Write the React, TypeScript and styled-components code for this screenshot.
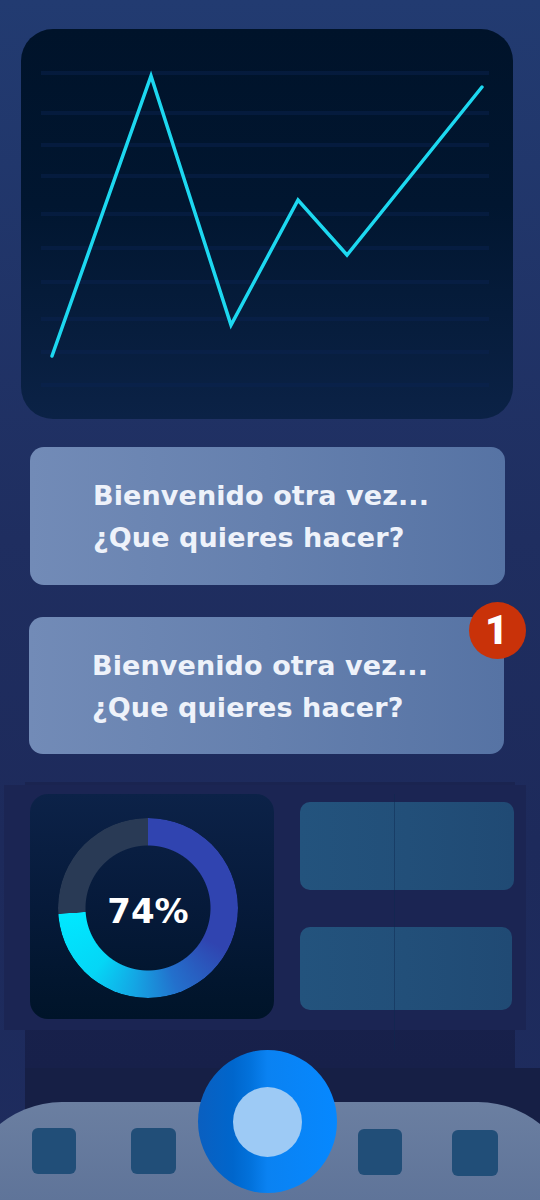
import React from "react";
import styled, { createGlobalStyle } from "styled-components";

const Global = createGlobalStyle`
  html, body { margin: 0; padding: 0; background: #1e2c5d; }
  body { font-family: "DejaVu Sans", "Liberation Sans", sans-serif; }
  * { box-sizing: border-box; }
`;

const Page = styled.div`
  width: 540px;
  height: 1200px;
  overflow: hidden;
  background: linear-gradient(180deg, #223b71 0%, #1f2e60 45%, #1d2a5b 70%, #1e2c5e 100%);
  display: flex;
  flex-direction: column;
`;

const ChartCard = styled.div`
  margin: 29px 27px 0 21px;
  height: 390px;
  border-radius: 32px;
  background: linear-gradient(180deg, #00132a 0%, #011630 45%, #0b2246 100%);
  overflow: hidden;
  flex-shrink: 0;
`;

const ChartSvg = styled.svg`
  display: block;
  width: 100%;
  height: 100%;
`;

const MessageCard = styled.div<{ $top: number; $left: number; $right: number; $h: number }>`
  position: relative;
  margin: ${(p) => p.$top}px ${(p) => p.$right}px 0 ${(p) => p.$left}px;
  height: ${(p) => p.$h}px;
  border-radius: 14px;
  background: linear-gradient(90deg, #728bb7 0%, #6580ae 50%, #5673a4 100%);
  display: flex;
  align-items: center;
  padding-left: 63px;
  flex-shrink: 0;
`;

const MessageText = styled.p`
  margin: 0;
  font-family: "DejaVu Sans", sans-serif;
  font-weight: 700;
  font-size: 27px;
  line-height: 42px;
  color: #eef2fa;
  padding-top: 2px;
  letter-spacing: 0.1px;
`;

const Badge = styled.span`
  position: absolute;
  top: -15px;
  right: -22px;
  width: 57px;
  height: 57px;
  border-radius: 50%;
  background: #c93209;
  color: #ffffff;
  display: flex;
  align-items: center;
  justify-content: center;
  font-family: Roboto, "Liberation Sans", sans-serif;
  font-weight: 900;
  font-size: 40px;
  line-height: 1;
  padding-right: 2px;
`;

const Shell = styled.div`
  margin: 28px 25px 0 25px;
  padding-top: 3px;
  height: 286px;
  background: linear-gradient(180deg, #1a2450 0%, #17204a 100%);
  flex-shrink: 0;
`;

const Panel = styled.div`
  margin: 0 -11px 0 -21px;
  height: 245px;
  background: #1b2553;
  display: grid;
  grid-template-columns: 244px 1fr;
  column-gap: 26px;
  padding: 9px 12px 0 26px;
`;

const DonutCard = styled.div`
  height: 225px;
  border-radius: 18px;
  background: linear-gradient(180deg, #0c2248 0%, #061a3a 50%, #001429 100%);
  padding: 24px 0 0 28px;
`;

const Ring = styled.div`
  position: relative;
  width: 180px;
  height: 180px;
  border-radius: 50%;
  background: conic-gradient(
    from 0deg,
    #3044b0 0deg,
    #3044b0 118deg,
    #2370cc 160deg,
    #14a6e4 190deg,
    #05d6f6 220deg,
    #00e8ff 266deg,
    #293a55 266.4deg,
    #293a55 360deg
  );
  -webkit-mask: radial-gradient(circle, transparent 62px, #000 63px);
  mask: radial-gradient(circle, transparent 62px, #000 63px);
`;

const DonutWrap = styled.div`
  position: relative;
  width: 180px;
  height: 180px;
`;

const Percent = styled.span`
  position: absolute;
  inset: 0;
  display: flex;
  align-items: center;
  justify-content: center;
  font-family: "DejaVu Sans", sans-serif;
  font-weight: 700;
  font-size: 34px;
  color: #ffffff;
  padding-top: 6px;
`;

const TileColumn = styled.div`
  position: relative;
  display: flex;
  flex-direction: column;
  padding-top: 8px;
  &::after {
    content: "";
    position: absolute;
    left: 94px;
    top: 0;
    bottom: -20px;
    width: 1px;
    background: rgba(14, 40, 80, 0.45);
  }
`;

const Tile = styled.div<{ $h: number; $mt: number; $mr: number }>`
  height: ${(p) => p.$h}px;
  margin-top: ${(p) => p.$mt}px;
  margin-right: ${(p) => p.$mr}px;
  border-radius: 10px;
  background: linear-gradient(90deg, #23537d 0%, #224f79 50%, #204a74 100%);
`;

const Dock = styled.div`
  position: relative;
  margin-left: 25px;
  flex: 1;
  background: #161f45;
  padding-top: 34px;
`;

const NavBar = styled.nav`
  margin-left: -61px;
  width: 612px;
  height: 98px;
  border-radius: 105px 105px 0 0;
  background: linear-gradient(180deg, #6b7fa1 0%, #5f7499 100%);
  display: flex;
  align-items: flex-start;
  padding: 26px 0 0 68px;
`;

const NavGroup = styled.div<{ $gap: number }>`
  display: flex;
  gap: ${(p) => p.$gap}px;
`;

const NavSpacer = styled.div`
  width: 182px;
`;

const NavItem = styled.div<{ $w?: number; $mt?: number }>`
  width: ${(p) => p.$w ?? 44}px;
  height: 46px;
  margin-top: ${(p) => p.$mt ?? 0}px;
  border-radius: 6px;
  background: #214e78;
`;

const Fab = styled.button`
  position: absolute;
  left: 173px;
  top: -18px;
  width: 139px;
  height: 143px;
  border: none;
  padding: 0;
  border-radius: 50%;
  background: linear-gradient(90deg, #0a5fc0 0%, #0066cc 25%, #0272dc 38%, #0a82f2 50%, #0688ff 100%);
  display: flex;
  align-items: center;
  justify-content: center;
`;

const FabDot = styled.span`
  width: 69px;
  height: 70px;
  border-radius: 50%;
  background: #9dcaf5;
`;

const gridY = [44, 84, 116, 147, 185, 219, 253, 290, 323, 356];

export default function App() {
  return (
    <>
      <Global />
      <Page>
        <ChartCard>
          <ChartSvg viewBox="0 0 492 390" preserveAspectRatio="none">
            {gridY.map((y) => (
              <line key={y} x1={20} x2={468} y1={y} y2={y} stroke="#0a2452" strokeOpacity={0.45} strokeWidth={4} />
            ))}
            <polyline
              points="31,327 130,47 210,296 277,171 326,226 461,58"
              fill="none"
              stroke="#1dd8f0"
              strokeWidth={3.5}
              strokeLinejoin="miter"
              strokeLinecap="round"
            />
          </ChartSvg>
        </ChartCard>

        <MessageCard $top={28} $left={30} $right={35} $h={138}>
          <MessageText>
            Bienvenido otra vez...
            <br />
            ¿Que quieres hacer?
          </MessageText>
        </MessageCard>

        <MessageCard $top={32} $left={29} $right={36} $h={137}>
          <MessageText>
            Bienvenido otra vez...
            <br />
            ¿Que quieres hacer?
          </MessageText>
          <Badge>1</Badge>
        </MessageCard>

        <Shell>
          <Panel>
            <DonutCard>
              <DonutWrap>
                <Ring />
                <Percent>74%</Percent>
              </DonutWrap>
            </DonutCard>
            <TileColumn>
              <Tile $h={88} $mt={0} $mr={0} />
              <Tile $h={83} $mt={37} $mr={2} />
            </TileColumn>
          </Panel>
        </Shell>

        <Dock>
          <NavBar>
            <NavGroup $gap={55}>
              <NavItem />
              <NavItem $w={45} />
            </NavGroup>
            <NavSpacer />
            <NavGroup $gap={50}>
              <NavItem $mt={1} />
              <NavItem $w={46} $mt={2} />
            </NavGroup>
          </NavBar>
          <Fab aria-label="Inicio">
            <FabDot />
          </Fab>
        </Dock>
      </Page>
    </>
  );
}
